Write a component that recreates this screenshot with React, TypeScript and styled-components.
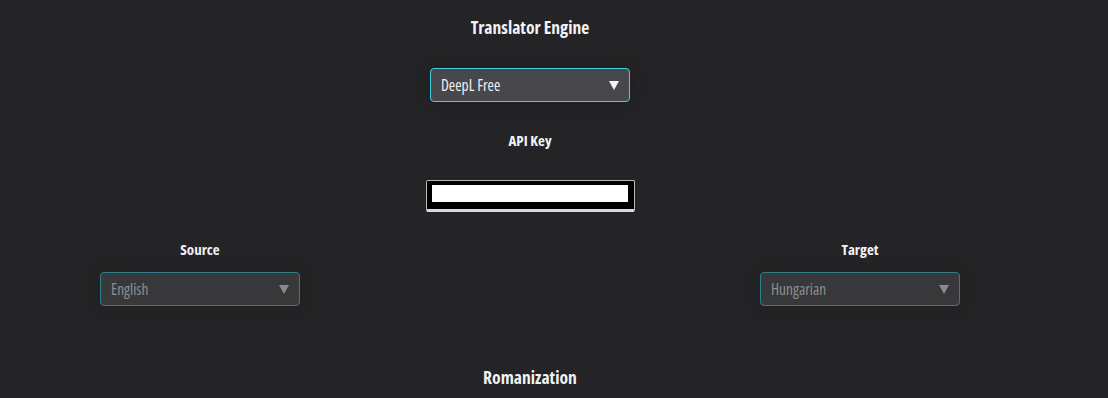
import React from 'react';
import styled, { createGlobalStyle } from 'styled-components';

const GlobalStyle = createGlobalStyle`
  html, body {
    margin: 0;
    padding: 0;
    background: #242426;
    font-family: 'Open Sans', 'DejaVu Sans Condensed', sans-serif;
    font-stretch: 75%;
  }
`;

const Page = styled.div`
  width: 1060px;
  height: 398px;
  overflow: hidden;
  display: flex;
  flex-direction: column;
  align-items: center;
`;

const Title = styled.h2`
  margin: 16px 0 0;
  font-size: 17.6px;
  font-weight: 700;
  color: #f2f2f4;
  line-height: 22px;
`;

const Label = styled.div`
  font-size: 15px;
  font-weight: 700;
  color: #f2f2f4;
  line-height: 18px;
  text-align: center;
`;

const SelectBox = styled.div<{ $dim?: boolean }>`
  box-sizing: border-box;
  width: 200px;
  height: 34px;
  border-radius: 4px;
  border: 1px solid ${(p) => (p.$dim ? '#2e7f89' : '#3fd2e3')};
  background: ${(p) => (p.$dim ? '#38383b' : '#48474c')};
  color: ${(p) => (p.$dim ? '#8c8e90' : '#f0f0f2')};
  box-shadow: 0 0 18px rgba(0, 0, 0, 0.18);
  display: flex;
  align-items: center;
  justify-content: space-between;
  padding: 0 10px 0 10px;
  font-size: 15.4px;
`;

const Arrow = styled.span<{ $dim?: boolean }>`
  width: 0;
  height: 0;
  margin-top: 1px;
  border-left: 5px solid transparent;
  border-right: 5px solid transparent;
  border-top: 9px solid ${(p) => (p.$dim ? '#8a8a8c' : '#f4f4f4')};
`;

const EngineSelect = styled.div`
  margin-top: 30px;
`;

const KeyLabel = styled(Label)`
  margin-top: 29px;
`;

const KeyField = styled.div`
  box-sizing: border-box;
  margin-top: 31px;
  width: 209px;
  height: 32px;
  background: #000;
  border: 1px solid #b8b8bc;
  border-bottom: 3px solid #d9d8e8;
  border-radius: 2px;
  padding: 4px 6px 4px 5px;
`;

const KeyInput = styled.input`
  display: block;
  width: 100%;
  height: 17px;
  box-sizing: border-box;
  border: none;
  outline: none;
  padding: 0;
  background: #fff;
`;

const LangRow = styled.div`
  margin-top: 28px;
  width: 990px;
  display: grid;
  grid-template-columns: 330px 330px 330px;
`;

const LangCol = styled.div`
  display: flex;
  flex-direction: column;
  align-items: center;
  gap: 14px;
`;

const Romanization = styled(Title)`
  margin-top: 60px;
`;

function Select({ value, dim }: { value: string; dim?: boolean }) {
  return (
    <SelectBox $dim={dim}>
      <span>{value}</span>
      <Arrow $dim={dim} />
    </SelectBox>
  );
}

export default function App() {
  return (
    <>
      <GlobalStyle />
      <Page>
        <Title>Translator Engine</Title>
        <EngineSelect>
          <Select value="DeepL Free" />
        </EngineSelect>
        <KeyLabel>API Key</KeyLabel>
        <KeyField>
          <KeyInput type="text" />
        </KeyField>
        <LangRow>
          <LangCol>
            <Label>Source</Label>
            <Select value="English" dim />
          </LangCol>
          <div />
          <LangCol>
            <Label>Target</Label>
            <Select value="Hungarian" dim />
          </LangCol>
        </LangRow>
        <Romanization>Romanization</Romanization>
      </Page>
    </>
  );
}
